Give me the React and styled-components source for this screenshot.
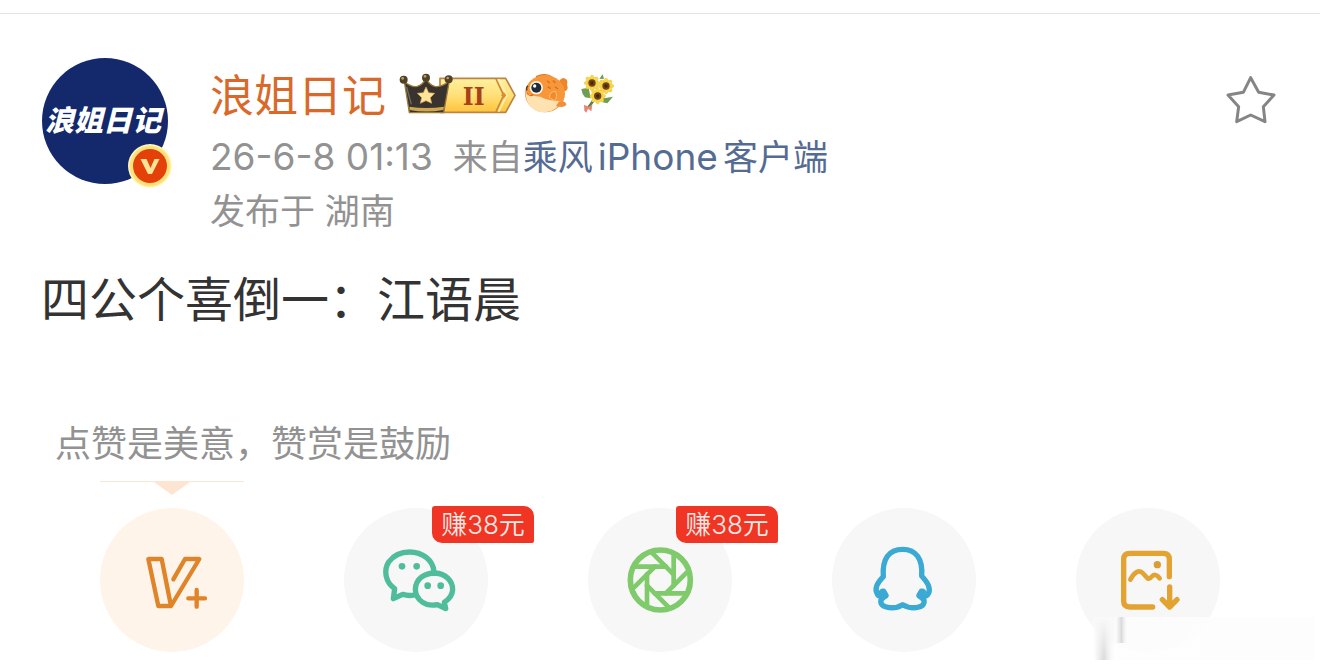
import React from 'react';
import styled, { createGlobalStyle } from 'styled-components';

const GlobalStyle = createGlobalStyle`
  * { box-sizing: border-box; }
  body {
    margin: 0;
    background: #fff;
    font-family: Inter, "Noto Sans CJK SC", sans-serif;
  }
`;

const Page = styled.main`
  position: relative;
  padding-bottom: 20px;
  overflow: hidden;
`;

const TopRule = styled.div`
  height: 14px;
  border-bottom: 1px solid #e4e4e4;
`;

const Header = styled.header`
  display: flex;
  align-items: flex-start;
  gap: 42px;
  padding: 44px 44px 0 42px;
`;

const Avatar = styled.div`
  position: relative;
  flex: none;
  display: flex;
  align-items: center;
  justify-content: center;
  width: 126px;
  height: 126px;
  padding-right: 4px;
  border-radius: 50%;
  background: #13296c;
  color: #fff;
  font-size: 29px;
  font-weight: 900;
  font-style: italic;
  line-height: 40px;
  white-space: nowrap;
`;

const Verified = styled.svg`
  position: absolute;
  right: -6px;
  bottom: -6px;
  width: 48px;
  height: 48px;
`;

const Info = styled.div`
  flex: 1;
  min-width: 0;
`;

const NameRow = styled.div`
  display: flex;
  align-items: center;
  gap: 8px;
  height: 72px;
`;

const Name = styled.h1`
  margin: 0 4px 0 0;
  padding-top: 4px;
  color: #d9692a;
  font-size: 44px;
  font-weight: 400;
  line-height: 68px;
  white-space: nowrap;
`;

const Medal = styled.svg`
  flex: none;
  width: ${(p) => p.$width}px;
  height: 42px;
`;

const Meta = styled.p`
  display: flex;
  margin: 0;
  color: #929292;
  font-size: 35px;
  line-height: 54px;
  white-space: nowrap;
`;

const Time = styled.time`
  margin-right: 20px;
  font-size: 37px;
`;

const Source = styled.a`
  display: flex;
  gap: 5px;
  color: #546b92;
  text-decoration: none;
`;

const Device = styled.span`
  font-size: 37px;
`;

const StarButton = styled.button`
  flex: none;
  width: 50px;
  height: 50px;
  margin-top: 17px;
  padding: 0;
  border: 0;
  background: none;
`;

const PostText = styled.p`
  margin: 30px 41px 0;
  color: #333;
  font-size: 48px;
  line-height: 64px;
`;

const Prompt = styled.p`
  margin: 86px 55px 0;
  color: #929292;
  font-size: 36px;
  line-height: 52px;
`;

const ShareList = styled.ul`
  display: flex;
  justify-content: space-between;
  margin: 11px 0 0;
  padding: 0 100px;
  list-style: none;
`;

const ShareItem = styled.li`
  position: relative;
  padding-top: 27px;
`;

const Pointer = styled.svg`
  position: absolute;
  top: 0;
  left: 0;
  width: 144px;
  height: 14px;
`;

const ShareButton = styled.button`
  display: block;
  width: 144px;
  height: 144px;
  padding: 0;
  border: 0;
  border-radius: 50%;
  background: ${(p) => (p.$active ? '#fff4ea' : '#f7f7f7')};
`;

const Icon = styled.svg`
  display: block;
  width: 100%;
  height: 100%;
  fill: none;
  stroke-linecap: round;
  stroke-linejoin: round;
`;

const Reward = styled.span`
  position: absolute;
  top: 25px;
  left: 88px;
  width: 102px;
  height: 37px;
  border-radius: 3px 10px 2px 10px;
  background: #f03524;
  color: #ffe9e4;
  font-size: 26px;
  font-weight: 350;
  line-height: 38px;
  text-align: center;
  white-space: nowrap;
`;

const Smudge = styled.svg`
  position: absolute;
  right: 0;
  bottom: 8px;
  width: 232px;
  height: 48px;
`;

const VerifiedMark = () => (
  <Verified viewBox="0 0 48 48" role="img" aria-label="认证">
    <circle cx="24" cy="24" r="22" fill="#fff6c4" />
    <circle cx="24" cy="24" r="20.5" fill="#ffe27c" />
    <circle cx="24" cy="24" r="17" fill="#e34109" />
    <path d="M14.5 17h6l4 9 4-9h5l-7.5 15h-4z" fill="#ffe496" />
  </Verified>
);

const CrownMedal = () => (
  <Medal $width={118} viewBox="24 36 354 126">
    <defs>
      <linearGradient id="gold" x1="0" y1="0" x2="0" y2="1">
        <stop offset="0" stopColor="#fff0a0" />
        <stop offset="0.5" stopColor="#ffe078" />
        <stop offset="1" stopColor="#ffc33c" />
      </linearGradient>
    </defs>
    <path d="M150 52H347L375 103 347 154H150z" fill="url(#gold)" stroke="#bd8343" strokeWidth="5" strokeLinejoin="round" />
    <path d="M318 54L341 103 318 152" fill="none" stroke="#c98a3e" strokeWidth="5" />
    <path d="M326 54L350 103 326 152" fill="none" stroke="#fff2b2" strokeWidth="5" />
    <path d="M341 93l8 10-8 10-8-10z" fill="#df8b36" />
    <text x="251" y="131" textAnchor="middle" fontFamily="DejaVu Serif, serif" fontSize="70" fontWeight="700" fill="#a8401a">II</text>
    <path d="M43 62Q66 80 82 76 98 72 108 52 118 72 134 76 154 80 178 60L161 155H58z" fill="#38332f" stroke="#9b7b38" strokeWidth="4" />
    <path d="M58 137Q109 145 162 137L160 147Q109 156 59 147z" fill="#d0a74e" />
    <path d="M50 78L64 130" stroke="#716b64" strokeWidth="4" />
    {[[41, 56], [108, 50], [176, 55]].map(([x, y]) => (
      <g key={x}>
        <circle cx={x} cy={y} r="12" fill="#514126" />
        <circle cx={x - 3} cy={y - 4} r="4" fill="#bba164" />
      </g>
    ))}
    <path d="M108 78l8 17 18 2-13 13 4 17-17-8-17 8 4-17-13-13 18-2z" fill="#ffe49b" stroke="#d9a94a" strokeWidth="2" />
  </Medal>
);

const FishMedal = () => (
  <Medal $width={46} viewBox="402 36 138 126">
    <path d="M505 71Q506 54 520 51 536 53 531 72 537 85 525 91L508 86z" fill="#ee852b" />
    <path d="M438 45Q463 33 485 45L492 58 437 58z" fill="#d97326" />
    <ellipse cx="465" cy="98" rx="60" ry="56" fill="#f8963a" />
    <path d="M407 94Q423 106 451 107 478 121 514 120C495 168 407 170 407 94z" fill="#ffe2b1" />
    <path d="M507 121Q529 118 529 132 519 143 498 135z" fill="#ef9038" />
    <path d="M471 59l8 7m10-8l7 8m-23 11l9 6m13-6l9 7" stroke="#db6d1b" strokeWidth="4" />
    <path d="M478 109Q479 91 496 91 505 107 493 119z" fill="#f28a2f" stroke="#ffc16c" strokeWidth="3" />
    <circle cx="439" cy="80" r="20" fill="#fff7e6" />
    <circle cx="439" cy="80" r="15" fill="#1f2b3b" />
    <circle cx="434" cy="75" r="5" fill="#fff" />
    <path d="M414 74Q407 80 411 88" fill="none" stroke="#5a3a22" strokeWidth="4" />
    <path d="M411 96Q418 108 430 101" fill="none" stroke="#d86a22" strokeWidth="4" />
  </Medal>
);

const FLOWERS = [[606, 66], [648, 75], [623, 105]];

const FlowerMedal = () => (
  <Medal $width={36} viewBox="564 36 108 126">
    <path d="M574 84l22-4 6 32-17-3-7-10zM633 113l36-6-17 20-14-3zM628 53l10-13 4 14z" fill="#6f9d52" />
    <path d="M610 119l-16 22" stroke="#568545" strokeWidth="8" />
    <path d="M582 131l13 6 12-4-3 18-10-8-5 12-6-6z" fill="#e98375" />
    {FLOWERS.map(([x, y]) => (
      <g key={x}>
        {[0, 45, 90, 135].map((a) => (
          <ellipse key={a} cx={x} cy={y} rx="24" ry="9" fill="#f8d848" stroke="#e7b730" strokeWidth="1" transform={`rotate(${a} ${x} ${y})`} />
        ))}
        <circle cx={x} cy={y} r="11" fill="#70421d" />
        <circle cx={x} cy={y} r="5" fill="#49270f" />
      </g>
    ))}
  </Medal>
);

const PlusIcon = () => (
  <Icon viewBox="30 114 432 432" stroke="#df8428" strokeWidth="13">
    <path d="M243 408H205L175 267H215L243 408L328 267H285L250 328" />
    <path d="M320 360V410M295 385H345" />
  </Icon>
);

const ChatIcon = () => (
  <Icon viewBox="27 39 432 432" stroke="#4fbd9b" strokeWidth="16">
    <path d="M238 300Q220 304 203 298L175 311 179 281C151 262 145 226 161 201 178 178 202 171 224 171 262 171 294 195 297 230" />
    <path d="M332 341L307 329C273 336 243 317 241 283 242 251 269 234 300 234 332 236 353 257 353 284 352 302 342 313 328 322z" />
    <g fill="#4fbd9b" stroke="none">
      <circle cx="201" cy="214" r="10" />
      <circle cx="245" cy="214" r="10" />
      <circle cx="278" cy="272" r="10" />
      <circle cx="317" cy="272" r="10" />
    </g>
  </Icon>
);

const MomentsIcon = () => (
  <Icon viewBox="24 39 432 432" stroke="#7fca6a" strokeWidth="14">
    <circle cx="241" cy="255" r="90" strokeWidth="17" />
    {[0, 45, 90, 135, 180, 225, 270, 315].map((a) => (
      <path key={a} d="M-80-40H17" transform={`translate(241 255) rotate(${a})`} />
    ))}
  </Icon>
);

const PenguinIcon = () => (
  <Icon viewBox="21 24 432 432" stroke="#3aa9d3" strokeWidth="16">
    <path d="M176 281Q166 296 158 284C147 267 155 251 175 230C171 176 192 148 233 148C273 148 294 177 290 228C312 251 319 269 308 284Q299 296 288 281" />
    <path d="M176 274L183 286 168 299Q164 320 193 323 216 325 233 314 251 325 274 323 300 320 297 300L282 286 289 274" />
    <path d="M172 276L180 287M293 276L285 287" strokeWidth="20" />
  </Icon>
);

const PictureIcon = () => (
  <Icon viewBox="48 24 432 432" stroke="#e3a333" strokeWidth="16">
    <path d="M328 230V178Q328 160 310 160H209Q191 160 191 178V303Q191 321 209 321H278" />
    <path d="M211 239C224 215 236 209 248 219L263 235Q269 238 274 231 286 217 299 235" strokeWidth="14" />
    <circle cx="292" cy="194" r="11" fill="#d99d34" stroke="none" />
    <path d="M329 261V321M307 299L329 321 351 299" />
  </Icon>
);

const SHARES = [
  { label: 'V+', icon: <PlusIcon />, active: true },
  { label: '微信', icon: <ChatIcon />, reward: '赚38元' },
  { label: '朋友圈', icon: <MomentsIcon />, reward: '赚38元' },
  { label: 'QQ', icon: <PenguinIcon /> },
  { label: '保存图片', icon: <PictureIcon /> },
];

export default function App() {
  return (
    <>
      <GlobalStyle />
      <Page>
        <TopRule />
        <Header>
          <Avatar>
            浪姐日记
            <VerifiedMark />
          </Avatar>
          <Info>
            <NameRow>
              <Name>浪姐日记</Name>
              <CrownMedal />
              <FishMedal />
              <FlowerMedal />
            </NameRow>
            <Meta>
              <Time>26-6-8 01:13</Time>
              <span>来自</span>
              <Source href="#source">
                <span>乘风</span>
                <Device>iPhone</Device>
                <span>客户端</span>
              </Source>
            </Meta>
            <Meta>发布于 湖南</Meta>
          </Info>
          <StarButton type="button" aria-label="收藏">
            <Icon viewBox="48 30 150 150" stroke="#858585" strokeWidth="9">
              <path d="M122 38L146 82 192 90 160 125 165 170 122 150 80 170 86 125 54 90 100 82z" />
            </Icon>
          </StarButton>
        </Header>
        <PostText>四公个喜倒一：江语晨</PostText>
        <Prompt>点赞是美意，赞赏是鼓励</Prompt>
        <ShareList>
          {SHARES.map((s) => (
            <ShareItem key={s.label}>
              {s.active && (
                <Pointer viewBox="0 0 144 14">
                  <path d="M0 0H144V1H90L72 14 54 1H0z" fill="#fde5d2" />
                </Pointer>
              )}
              <ShareButton type="button" aria-label={s.label} $active={s.active}>
                {s.icon}
              </ShareButton>
              {s.reward && <Reward>{s.reward}</Reward>}
            </ShareItem>
          ))}
        </ShareList>
        <Smudge viewBox="0 0 232 48" aria-hidden="true">
          <defs>
            <linearGradient id="veil" x1="0" x2="1" y1="0" y2="0">
              <stop offset="0" stopColor="#fff" stopOpacity="0" />
              <stop offset="0.15" stopColor="#fdfdfd" stopOpacity="0.8" />
              <stop offset="1" stopColor="#fdfdfd" />
            </linearGradient>
            <linearGradient id="streak" x1="0" x2="1" y1="0" y2="0">
              <stop offset="0" stopColor="#ddd" stopOpacity="0" />
              <stop offset="0.5" stopColor="#dadada" />
              <stop offset="1" stopColor="#eee" stopOpacity="0" />
            </linearGradient>
            <linearGradient id="fall" x1="0" x2="0" y1="0" y2="1">
              <stop offset="0" stopColor="#f9f9f9" />
              <stop offset="1" stopColor="#f9f9f9" stopOpacity="0" />
            </linearGradient>
          </defs>
          <rect x="0" y="1" width="226" height="43" fill="url(#veil)" />
          <rect x="6" y="1" width="20" height="43" fill="url(#streak)" />
          <rect x="6" y="1" width="20" height="43" fill="url(#fall)" />
          <rect x="28" y="1" width="11" height="26" fill="url(#streak)" />
        </Smudge>
      </Page>
    </>
  );
}
